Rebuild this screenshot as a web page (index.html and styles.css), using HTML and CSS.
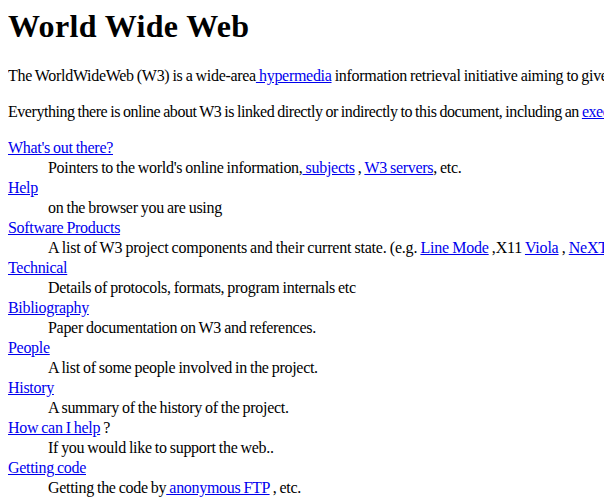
FILE: index.html
```html
<!DOCTYPE html>
<html>
<head>
<meta charset="utf-8">
<title>The World Wide Web project</title>
<link rel="stylesheet" href="styles.css">
</head>
<body class="page">
<h1 class="title">World Wide Web</h1>
<p class="para">The WorldWideWeb (W3) is a wide-area<a href="#"> hypermedia</a> information retrieval initiative aiming to give universal access to a large universe of documents.</p>
<p class="para para-tight">Everything there is online about W3 is linked directly or indirectly to this document, including an <a href="#">executive summary</a> of the project, <a href="#">Mailing lists</a> , <a href="#">Policy</a> , November's <a href="#">W3 news</a> , <a href="#">Frequently Asked Questions</a> .</p>
<dl class="list">
<dt><a href="#">What's out there?</a></dt>
<dd>Pointers to the world's online information,<a href="#"> subjects</a> , <a href="#">W3 servers</a>, etc.</dd>
<dt><a href="#">Help</a></dt>
<dd>on the browser you are using</dd>
<dt><a href="#">Software Products</a></dt>
<dd class="loose">A list of W3 project components and their current state. (e.g. <a href="#">Line Mode</a> ,X11 <a href="#">Viola</a> , <a href="#">NeXTStep</a> , <a href="#">Servers</a> , <a href="#">Tools</a> , <a href="#">Mail robot</a> , <a href="#">Library</a> )</dd>
<dt><a href="#">Technical</a></dt>
<dd>Details of protocols, formats, program internals etc</dd>
<dt><a href="#">Bibliography</a></dt>
<dd>Paper documentation on W3 and references.</dd>
<dt><a href="#">People</a></dt>
<dd>A list of some people involved in the project.</dd>
<dt><a href="#">History</a></dt>
<dd>A summary of the history of the project.</dd>
<dt><a href="#">How can I help</a> ?</dt>
<dd>If you would like to support the web..</dd>
<dt><a href="#">Getting code</a></dt>
<dd>Getting the code by<a href="#"> anonymous FTP</a> , etc.</dd>
</dl>
</body>
</html>
```
FILE: styles.css
```css
html { background: #fff; }
.page {
  margin: 8px;
  font-family: "Liberation Serif", "Times New Roman", serif;
  font-size: 16px;
  line-height: 20px;
  letter-spacing: -0.3px;
  word-spacing: -0.6px;
  color: #000;
  white-space: nowrap;
}
.title {
  font-size: 32px;
  line-height: 37px;
  font-weight: bold;
  letter-spacing: 0.35px;
  word-spacing: 0;
  margin: 0 0 21px 0;
}
.para { margin: 0 0 16px 0; }
.para-tight { letter-spacing: -0.45px; }
.list { margin: 0; }
.list dd { margin-left: 40px; }
.list dd.loose { letter-spacing: -0.2px; }
a { color: #0000ee; text-decoration: underline; }
```
